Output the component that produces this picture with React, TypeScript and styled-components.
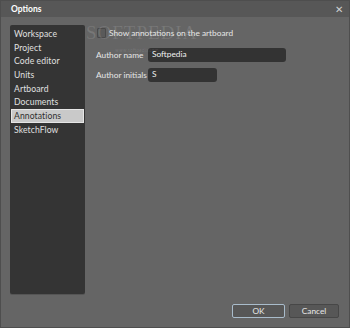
import React from 'react';
import styled, { createGlobalStyle } from 'styled-components';

const Global = createGlobalStyle`
    html, body {
        margin: 0;
        padding: 0;
        background: #636363;
    }
    * { box-sizing: border-box; }
`;

const Dialog = styled.div`
    position: relative;
    width: 350px;
    height: 328px;
    display: flex;
    flex-direction: column;
    background: #656565;
    border: 1px solid #4e4e4e;
    font-family: Lato, "Open Sans", sans-serif;
    font-size: 8.3px;
    color: #e6e6e6;
    overflow: hidden;
`;

const TitleBar = styled.div`
    height: 16px;
    display: flex;
    align-items: center;
    justify-content: space-between;
    padding: 0 6px 0 10px;
    background: #575757;
`;

const Title = styled.span`
    font-weight: 700;
    font-size: 8.5px;
    color: #ffffff;
`;

const Close = styled.span`
    font-size: 10px;
    color: #d0d0d0;
    line-height: 1;
`;

const Body = styled.div`
    flex: 1;
    display: flex;
    gap: 11px;
    padding: 8px 0 0 9px;
`;

const Nav = styled.div`
    width: 75px;
    height: 269px;
    background: #343434;
    border-radius: 2px;
    padding: 2px 1px;
    display: flex;
    flex-direction: column;
    box-shadow: 0 1px 0 #555;
`;

const NavItem = styled.div<{ $active?: boolean }>`
    height: 13.7px;
    line-height: 12px;
    padding-left: 2px;
    font-size: 8.6px;
    letter-spacing: 0.1px;
    white-space: nowrap;
    color: ${p => (p.$active ? '#2e2e2e' : '#e0e0e0')};
    background: ${p => (p.$active ? '#c9c9c9' : 'transparent')};
    border: 1px solid ${p => (p.$active ? '#e6e6e6' : 'transparent')};
`;

const Content = styled.div`
    display: flex;
    flex-direction: column;
    padding-top: 2px;
`;

const CheckRow = styled.label`
    display: flex;
    align-items: center;
    gap: 3px;
    height: 11px;
    margin-left: 1px;
    white-space: nowrap;
`;

const Box = styled.span`
    width: 9px;
    height: 10px;
    border: 1px solid #4a4a4a;
    background: #5a5a5a;
    border-radius: 1px;
`;

const FieldRow = styled.div<{ $gap: number }>`
    display: flex;
    align-items: center;
    height: 14px;
    margin-top: ${p => p.$gap}px;
`;

const Label = styled.span`
    width: 52px;
    flex-shrink: 0;
    white-space: nowrap;
    color: #e6e6e6;
`;

const Input = styled.div<{ $w: number }>`
    width: ${p => p.$w}px;
    height: 14px;
    line-height: 13px;
    padding-left: 4px;
    background: #333333;
    border-radius: 3px;
    color: #f0f0f0;
`;

const Footer = styled.div`
    display: flex;
    justify-content: flex-end;
    gap: 4px;
    padding: 0 10px 9px 0;
`;

const Button = styled.div<{ $primary?: boolean }>`
    width: ${p => (p.$primary ? 53 : 50)}px;
    height: 14px;
    line-height: 12px;
    text-align: center;
    background: #575757;
    border: 1px solid ${p => (p.$primary ? '#a9bccb' : '#474747')};
    border-radius: 2px;
    color: #e8e8e8;
`;

const Watermark = styled.div`
    position: absolute;
    left: 85px;
    top: 21px;
    font-family: "Liberation Serif", serif;
    font-size: 19px;
    letter-spacing: 1px;
    color: rgba(255, 255, 255, 0.12);
    pointer-events: none;
`;

const WatermarkSub = styled.div`
    position: absolute;
    left: 114px;
    top: 46px;
    font-size: 5px;
    color: rgba(255, 255, 255, 0.1);
    pointer-events: none;
`;

const items = ['Workspace', 'Project', 'Code editor', 'Units', 'Artboard', 'Documents', 'Annotations', 'SketchFlow'];

export default function App() {
    return (
        <Dialog>
            <Global />
            <TitleBar>
                <Title>Options</Title>
                <Close>✕</Close>
            </TitleBar>
            <Body>
                <Nav>
                    {items.map(i => (
                        <NavItem key={i} $active={i === 'Annotations'}>{i}</NavItem>
                    ))}
                </Nav>
                <Content>
                    <CheckRow>
                        <Box />
                        Show annotations on the artboard
                    </CheckRow>
                    <FieldRow $gap={10}>
                        <Label>Author name</Label>
                        <Input $w={138}>Softpedia</Input>
                    </FieldRow>
                    <FieldRow $gap={6}>
                        <Label>Author initials</Label>
                        <Input $w={69}>S</Input>
                    </FieldRow>
                </Content>
            </Body>
            <Footer>
                <Button $primary>OK</Button>
                <Button>Cancel</Button>
            </Footer>
            <Watermark>SOFTPEDIA</Watermark>
            <WatermarkSub>www.softpedia.com</WatermarkSub>
        </Dialog>
    );
}
